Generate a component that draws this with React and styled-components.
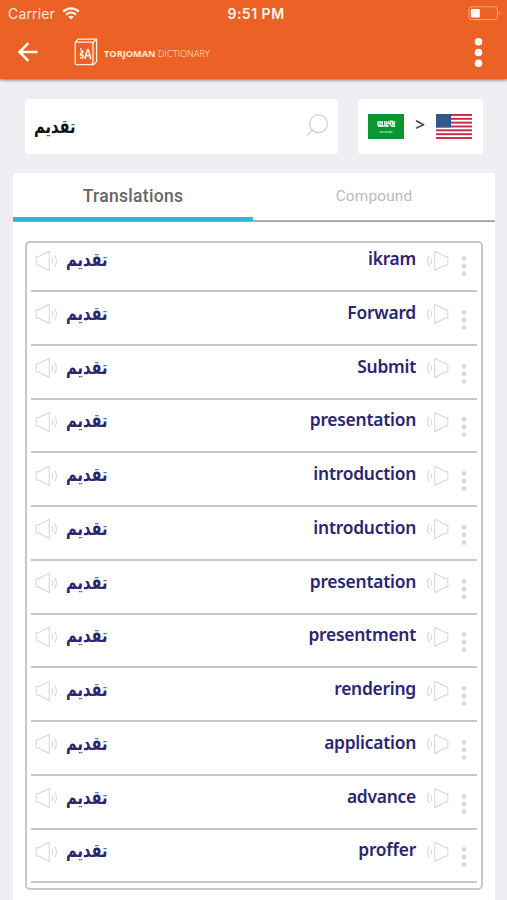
import React from "react";
import styled, { createGlobalStyle } from "styled-components";

const Global = createGlobalStyle`
  * { box-sizing: border-box; }
  html, body { margin: 0; background: #efeef3; }
  svg { display: block; flex: none; }
`;

const Screen = styled.main`
  width: 507px;
  height: 900px;
  overflow: hidden;
  display: flex;
  flex-direction: column;
  background: #efeef3;
  font-family: "Noto Sans", "DejaVu Sans", sans-serif;
`;

const Header = styled.header`
  height: 79px;
  flex: none;
  background: #eb6126;
  color: #fff;
  box-shadow: 0 1px 3px rgba(60, 60, 80, 0.75);
`;

const StatusBar = styled.div`
  height: 27px;
  display: grid;
  grid-template-columns: 1fr auto 1fr;
  align-items: center;
  padding: 0 6px 0 8px;
  font-family: Inter, "Liberation Sans", sans-serif;
`;

const Carrier = styled.div`
  display: flex;
  align-items: center;
  gap: 7px;
  font-size: 14px;
  letter-spacing: 0.15px;
  color: #ffe6da;
`;

const Clock = styled.div`
  font-size: 14px;
  font-weight: 600;
  letter-spacing: 0.5px;
  padding-left: 3px;
  color: #fff3ec;
`;

const BatterySlot = styled.div`
  display: flex;
  justify-content: flex-end;
`;

const NavBar = styled.div`
  height: 52px;
  display: flex;
  align-items: center;
  padding: 0 22px 2px 18px;
`;

const Brand = styled.div`
  display: flex;
  align-items: center;
  gap: 6px;
  margin-left: 36px;
  flex: 1;
`;

const BrandName = styled.div`
  font-family: "Open Sans", "Noto Sans", sans-serif;
  font-size: 9.2px;
  font-weight: 300;
  letter-spacing: 0.06px;
  white-space: nowrap;
  padding-top: 3px;
  color: #ffe9dd;
  b { font-weight: 700; letter-spacing: 0; }
`;

const SearchRow = styled.section`
  display: flex;
  gap: 20px;
  flex: none;
  height: 55px;
  margin: 20px 24px 0 25px;
`;

const SearchBox = styled.div`
  width: 313px;
  display: flex;
  justify-content: space-between;
  align-items: center;
  padding: 0 9px 2px;
  background: #fff;
  border-radius: 3px;
`;

const LanguageBox = styled.div`
  flex: 1;
  display: flex;
  align-items: center;
  padding: 0 11px 0 10px;
  background: #fff;
  border-radius: 3px;
`;

const Direction = styled.span`
  flex: 1;
  text-align: center;
  font-size: 17px;
  font-weight: 600;
  line-height: 20px;
  padding-bottom: 3px;
  color: #444;
`;

const Arabic = styled.span`
  display: block;
  font-family: "DejaVu Sans", sans-serif;
  font-weight: 700;
  font-size: 17px;
  line-height: 24px;
  transform: scale(0.86, 1.12);
  transform-origin: left center;
  color: ${(p) => p.$color};
`;

const Panel = styled.section`
  flex: 1;
  margin: 19px 12px 0 13px;
  background: #fff;
  border-radius: 2px 2px 0 0;
`;

const Tabs = styled.div`
  display: grid;
  grid-template-columns: 240px 1fr;
  height: 49px;
  border-bottom: 1px solid #a4a4a8;
`;

const Tab = styled.div`
  text-align: center;
  padding-top: 12px;
  line-height: 22px;
  font-family: Roboto, sans-serif;
  font-size: ${(p) => (p.$active ? 17.5 : 15.4)}px;
  font-weight: ${(p) => (p.$active ? 500 : 400)};
  letter-spacing: ${(p) => (p.$active ? 0.3 : 0.15)}px;
  color: ${(p) => (p.$active ? "#666" : "#bbb")};
  border-bottom: ${(p) => (p.$active ? "4px solid #38b2da" : "1px solid #b4b4b6")};
`;

const List = styled.div`
  margin: 19px 12px 0;
  height: 649px;
  padding: 0 4px;
  border: 2px solid #c8c8ca;
  border-radius: 5px;
`;

const Row = styled.div`
  height: ${(p) => (p.$first ? 49 : 53.75)}px;
  border-bottom: 2px solid #c8c8ca;
  display: flex;
  align-items: flex-end;
  padding: 0 10px 12px 4px;
`;

const RowContent = styled.div`
  display: flex;
  align-items: center;
  width: 100%;
  height: 35px;
`;

const Source = styled.div`
  margin-left: 7px;
  padding-bottom: 3px;
`;

const Target = styled.div`
  flex: 1;
  text-align: right;
  font-size: 17.4px;
  font-weight: 600;
  letter-spacing: -0.24px;
  line-height: 24px;
  padding: 0 9px 5px 0;
  color: #2b2470;
`;

const MoreSlot = styled.div`
  margin-left: 12px;
  padding-top: 11px;
`;

const Wifi = () => (
  <svg width="18" height="13" viewBox="0 0 18 13" fill="none" stroke="#fff0e6" strokeWidth="2.2">
    <path d="M1.2 4.6C5.8.3 12.2.3 16.8 4.6M4 7.7C7 4.9 11 4.9 14 7.7" />
    <path d="M9 12.6L6.1 9.8Q9 7.5 11.9 9.8Z" fill="#fff0e6" stroke="none" />
  </svg>
);

const Battery = () => (
  <svg width="33" height="15" viewBox="0 0 33 15">
    <rect x=".8" y=".8" width="28.6" height="12.8" rx="3" fill="none" stroke="#f6a783" />
    <rect x="2.8" y="3" width="9" height="8.6" rx="1" fill="#fff" />
    <path d="M31 4.8q2 2.4 0 4.8z" fill="#f6a96f" />
  </svg>
);

const BackArrow = () => (
  <svg width="20" height="20" viewBox="0 0 20 20" fill="none" stroke="#fff" strokeWidth="2.5">
    <path d="M19.5 10H2M10.3 1.1L1.5 10l8.8 8.9" />
  </svg>
);

const Book = () => (
  <svg width="24" height="28" viewBox="0 0 24 28" fill="none" stroke="#fff0e5" strokeWidth="1.3" strokeLinejoin="round">
    <path d="M1.2 4.2L4 1.1h18.6v22.5L19.5 26.7H3.2q-2 0-2-2zM1.5 4.2H17q2 0 2 2v18q0 1.8-1.8 2.2M19 4.5L22.3 1.5" />
    <path d="M10.6 21l3-9.4h.8L16.8 21M11.4 17.6h4.6M6.5 13q2.8-.8 2.2 1.6-2.8.6-2.2 2.4 2.8-.4 2.6 1.6-.6 2-3.2.9M6 10.8h1.4" strokeWidth="1.6" />
  </svg>
);

const Dots = ({ width, height, radius, color }) => (
  <svg width={width} height={height} viewBox={`0 0 ${width} ${height}`} fill={color}>
    {[radius, height / 2, height - radius].map((cy) => (
      <circle key={cy} cx={width / 2} cy={cy} r={radius} />
    ))}
  </svg>
);

const Search = () => (
  <svg width="23" height="23" viewBox="0 0 23 23" fill="none" stroke="#d2d2d2" strokeWidth="1.3">
    <circle cx="12.5" cy="9.7" r="8.9" />
    <path d="M6.3 16.2L.8 21.8" />
  </svg>
);

const Speaker = ({ flipped }) => (
  <svg width="24" height="22" viewBox="0 0 24 22" fill="none" stroke="#dbdbdb" strokeWidth="1.2" strokeLinejoin="round">
    <g transform={flipped ? "translate(24 0) scale(-1 1)" : undefined}>
      <path d="M1.2 6.8L4.3 6.3 14.3 1.2V20.6L4.3 15.3 1.2 14.8Z" />
      <path d="M17 8q1.7 3 0 6M19.5 5.7q4 5.3 0 10.6" />
    </g>
  </svg>
);

const SaudiFlag = () => (
  <svg width="36" height="25" viewBox="0 0 36 25">
    <path fill="#0a9731" d="M0 0h36v25H0z" />
    <path d="M10 7v4h3M12 7v2M14.3 7v5h2.5V7M18.5 7.3v4.4h2M20.6 7v2M22.5 12V7.3h2v4M26.4 7v5M10 12.3h5M17.5 12.3h3M23 12.3h4M11 8.8h3M18 9.5h4M24 9h3" fill="none" stroke="#e2f4e5" strokeWidth="1.4" />
    <path d="M11.5 18h13M22.3 16.9v2.2" stroke="#b9e3c0" fill="none" />
  </svg>
);

const UsFlag = () => (
  <svg width="36" height="25" viewBox="0 0 36 25">
    <path fill="#fff" d="M0 0h36v25H0z" />
    {[0, 1, 2, 3, 4, 5, 6].map((i) => (
      <rect key={i} y={(i * 50) / 13} width="36" height={25 / 13} fill="#c42b4a" />
    ))}
    <path fill="#34558b" d="M0 0h15v13.46H0z" />
    {[2, 4.5, 7, 9.5, 12].map((y) => (
      <path key={y} d={`M1.5 ${y}H14`} stroke="#4e6c9b" strokeWidth=".5" strokeDasharray="1 1.5" />
    ))}
  </svg>
);

const words = [
  "ikram", "Forward", "Submit", "presentation", "introduction", "introduction",
  "presentation", "presentment", "rendering", "application", "advance", "proffer",
];

export default function App() {
  return (
    <Screen>
      <Global />
      <Header>
        <StatusBar>
          <Carrier>Carrier <Wifi /></Carrier>
          <Clock>9:51 PM</Clock>
          <BatterySlot><Battery /></BatterySlot>
        </StatusBar>
        <NavBar>
          <BackArrow />
          <Brand>
            <Book />
            <BrandName><b>TORJOMAN</b> DICTIONARY</BrandName>
          </Brand>
          <Dots width={13} height={29} radius={3.8} color="#fff" />
        </NavBar>
      </Header>
      <SearchRow>
        <SearchBox>
          <Arabic dir="rtl" $color="#111">تقديم</Arabic>
          <Search />
        </SearchBox>
        <LanguageBox>
          <SaudiFlag />
          <Direction>&gt;</Direction>
          <UsFlag />
        </LanguageBox>
      </SearchRow>
      <Panel>
        <Tabs>
          <Tab $active>Translations</Tab>
          <Tab>Compound</Tab>
        </Tabs>
        <List>
          {words.map((word, i) => (
            <Row key={i} $first={i === 0}>
              <RowContent>
                <Speaker />
                <Source><Arabic dir="rtl" $color="#2b2470">تقديم</Arabic></Source>
                <Target>{word}</Target>
                <Speaker flipped />
                <MoreSlot><Dots width={6} height={20} radius={2.4} color="#dadadc" /></MoreSlot>
              </RowContent>
            </Row>
          ))}
        </List>
      </Panel>
    </Screen>
  );
}
